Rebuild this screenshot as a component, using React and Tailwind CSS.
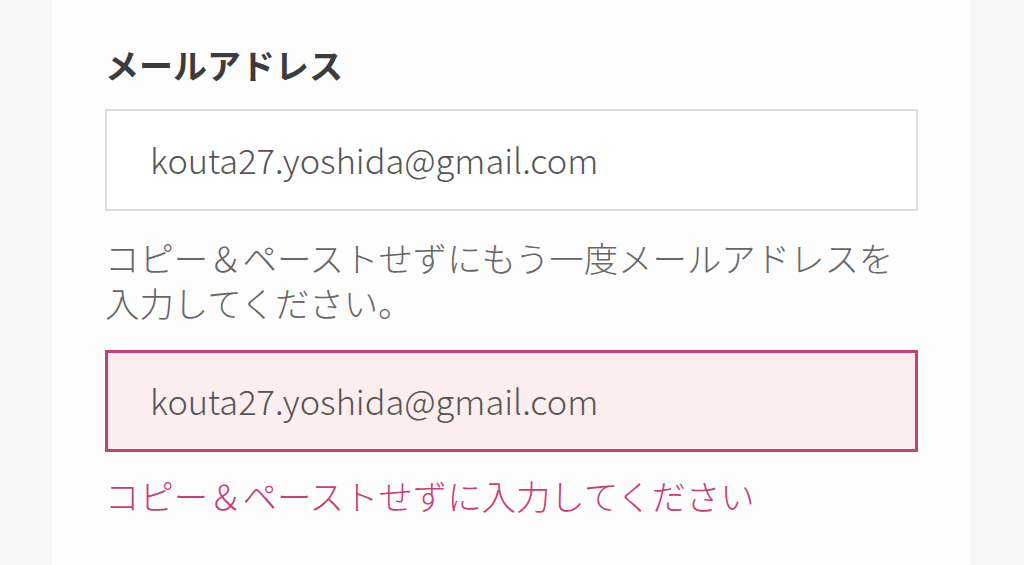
export default function App() {
  const font = { fontFamily: '"Noto Sans CJK JP", "Noto Sans", sans-serif' }

  return (
    <div className="min-h-[565px] h-[565px] bg-[#f6f6f6] flex overflow-hidden" style={font}>
      <div className="ml-[52px] w-[919px] bg-[#fdfdfd] px-[53px] pt-[42px]">
        {/* ラベル */}
        <label className="block text-[34px] leading-[45px] font-bold text-[#3c3c3c]">
          メールアドレス
        </label>

        {/* 1回目の入力 */}
        <div className="mt-[22px] h-[102px] border-2 border-[#dedede] bg-white flex items-center pl-[43px]">
          <span className="text-[34.4px] font-light text-[#555555]">kouta27.yoshida@gmail.com</span>
        </div>

        <p className="mt-[24px] text-[34.4px] leading-[45px] font-light text-[#666666]">
          コピー＆ペーストせずにもう一度メールアドレスを入力してください。
        </p>

        {/* 確認用の入力（エラー） */}
        <div className="mt-[25px] h-[102px] border-[3px] border-[#c63f78] bg-[#fcedee] flex items-center pl-[42px]">
          <span className="text-[34.4px] font-light text-[#555555]">kouta27.yoshida@gmail.com</span>
        </div>

        <p className="mt-[21px] text-[34.4px] leading-[45px] font-light text-[#c63f78]">
          コピー＆ペーストせずに入力してください
        </p>
      </div>
    </div>
  )
}
